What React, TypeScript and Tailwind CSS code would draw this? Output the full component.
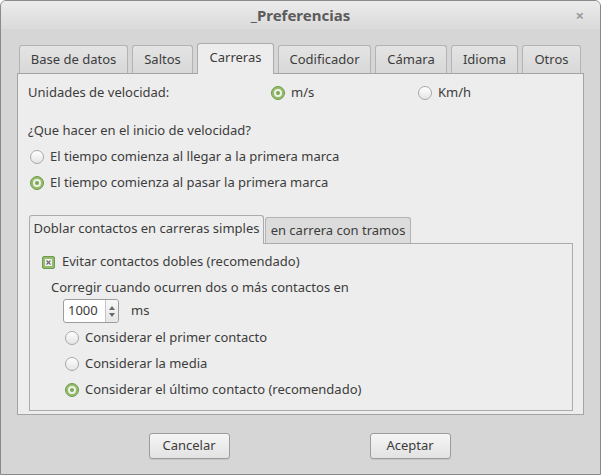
import React from 'react';

const textColor = 'text-[#3c3c3c]';

// Radio button bullet, selected or not
const Radio = ({ checked }: { checked?: boolean }) =>
  checked ? (
    <span className="w-[14px] h-[14px] rounded-full border border-[#6f9a4c] bg-[#94be6c] flex items-center justify-center shrink-0">
      <span className="w-[8px] h-[8px] rounded-full border-2 border-[#eef3e8] bg-[#7ca657]" />
    </span>
  ) : (
    <span className="w-[14px] h-[14px] rounded-full border border-[#a8a8a8] bg-gradient-to-b from-white to-[#e4e4e4] shrink-0" />
  );

const RadioRow = ({ label, checked }: { label: string; checked?: boolean }) => (
  <div className="h-[26px] flex items-center gap-[6px]">
    <Radio checked={checked} />
    <span>{label}</span>
  </div>
);

const mainTabs = [
  { name: 'Base de datos', w: 'w-[109px]' },
  { name: 'Saltos', w: 'w-[61px]' },
  { name: 'Carreras', w: 'w-[77px]', active: true },
  { name: 'Codificador', w: 'w-[93px]' },
  { name: 'Cámara', w: 'w-[72px]' },
  { name: 'Idioma', w: 'w-[67px]' },
  { name: 'Otros', w: 'w-[59px]' },
];

export default function App() {
  return (
    <div
      className={`w-[601px] h-[475px] bg-[#d6d6d6] border border-[#8a8a8a] rounded-t-[6px] flex flex-col overflow-hidden text-[13px] ${textColor}`}
      style={{ fontFamily: '"Noto Sans", "DejaVu Sans", sans-serif' }}
    >
      {/* title bar */}
      <div className="h-[28px] relative flex items-center justify-center bg-gradient-to-b from-[#ececec] to-[#dadada] shrink-0">
        <span className="text-[15px] font-bold text-[#5b5b5b]">_Preferencias</span>
        <span className="absolute right-[16px] top-[3px] text-[15px] font-bold text-[#9a9a9a]">×</span>
      </div>

      {/* notebook */}
      <div className="px-[16px] mt-[13px]">
        <div className="flex items-end gap-[4px] pl-[2px] h-[31px]">
          {mainTabs.map((t) =>
            t.active ? (
              <div
                key={t.name}
                className={`${t.w} h-[31px] -mb-px relative z-10 flex items-center justify-center pb-[3px] bg-[#ededed] border border-b-0 border-[#ababab] rounded-t-[3px]`}
              >
                {t.name}
              </div>
            ) : (
              <div
                key={t.name}
                className={`${t.w} h-[28px] flex items-center justify-center bg-gradient-to-b from-[#e4e4e4] to-[#d8d8d8] border border-b-0 border-[#b3b3b3] rounded-t-[3px]`}
              >
                {t.name}
              </div>
            )
          )}
        </div>

        <div className="h-[342px] bg-[#ededed] border border-[#a4a4a4] pl-[10px] pr-[10px] pt-[9px] flex flex-col">
          <div className="h-[20px] flex items-center">
            <span className="w-[243px]">Unidades de velocidad:</span>
            <div className="w-[147px] flex items-center gap-[6px]">
              <Radio checked />
              <span>m/s</span>
            </div>
            <div className="flex items-center gap-[6px]">
              <Radio />
              <span>Km/h</span>
            </div>
          </div>

          <div className="h-[20px] mt-[18px] flex items-center">¿Que hacer en el inicio de velocidad?</div>
          <div className="mt-[3px] pl-[2px]">
            <RadioRow label="El tiempo comienza al llegar a la primera marca" />
            <RadioRow label="El tiempo comienza al pasar la primera marca" checked />
          </div>

          {/* inner notebook */}
          <div className="mt-[18px] pl-[1px]">
            <div className="flex items-end gap-[1px] h-[29px]">
              <div className="w-[235px] h-[29px] -mb-px relative z-10 flex items-center justify-center pb-[2px] bg-[#ededed] border border-b-0 border-[#ababab] rounded-t-[3px]">
                Doblar contactos en carreras simples
              </div>
              <div className="w-[146px] h-[26px] flex items-center justify-center bg-[#dcdcdc] border border-b-0 border-[#b3b3b3] rounded-t-[3px]">
                en carrera con tramos
              </div>
            </div>
            <div className="h-[168px] bg-[#ededed] border border-[#ababab] pt-[8px] pl-[12px] flex flex-col">
              <div className="h-[20px] flex items-center gap-[7px]">
                <span className="w-[13px] h-[13px] rounded-[2px] border border-[#6f9a4c] bg-[#93bd6c] flex items-center justify-center">
                  <span className="w-[7px] h-[7px] bg-[#f2f2f2] flex items-center justify-center">
                    <svg width="5" height="5" viewBox="0 0 5 5">
                      <path d="M0.5 0.5 L4.5 4.5 M4.5 0.5 L0.5 4.5" stroke="#6a6a6a" strokeWidth="1.2" />
                    </svg>
                  </span>
                </span>
                <span>Evitar contactos dobles (recomendado)</span>
              </div>
              <div className="h-[20px] mt-[6px] pl-[9px] flex items-center">Corregir cuando ocurren dos o más contactos en</div>
              <div className="mt-[1px] pl-[21px] flex items-center gap-[12px]">
                <div className="w-[56px] h-[24px] bg-white border border-[#9c9c9c] rounded-[3px] flex items-stretch">
                  <span className="flex-1 flex items-center pl-[4px]">1000</span>
                  <span className="w-[13px] border-l border-[#c4c4c4] bg-gradient-to-b from-[#f8f8f8] to-[#e6e6e6] rounded-r-[3px] flex flex-col items-center justify-center gap-[3px]">
                    <svg width="6" height="4" viewBox="0 0 6 4">
                      <path d="M3 0 L6 4 L0 4 Z" fill="#6a6a6a" />
                    </svg>
                    <svg width="6" height="4" viewBox="0 0 6 4">
                      <path d="M0 0 L6 0 L3 4 Z" fill="#6a6a6a" />
                    </svg>
                  </span>
                </div>
                <span>ms</span>
              </div>
              <div className="mt-[2px] pl-[23px]">
                <RadioRow label="Considerar el primer contacto" />
                <RadioRow label="Considerar la media" />
                <RadioRow label="Considerar el último contacto (recomendado)" checked />
              </div>
            </div>
          </div>
        </div>
      </div>

      {/* buttons */}
      <div className="mt-[18px] pr-[2px] flex justify-center gap-[140px]">
        {['Cancelar', 'Aceptar'].map((b) => (
          <button
            key={b}
            className="w-[81px] h-[26px] rounded-[3px] border border-[#9c9c9c] bg-gradient-to-b from-[#f6f6f6] to-[#e2e2e2] shadow-[0_1px_0_rgba(0,0,0,0.08)]"
          >
            {b}
          </button>
        ))}
      </div>
    </div>
  );
}
